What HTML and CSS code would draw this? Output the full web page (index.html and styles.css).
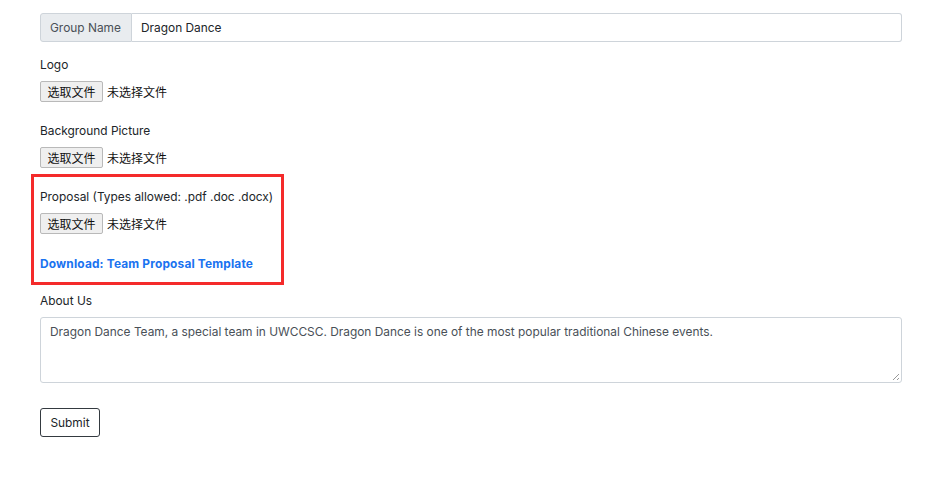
FILE: index.html
```html
<!DOCTYPE html>
<html lang="en">
<head>
<meta charset="utf-8">
<title>Group Form</title>
<link rel="stylesheet" href="styles.css">
</head>
<body>
<form class="form">
  <div class="input-group">
    <span class="addon">Group Name</span>
    <span class="control">Dragon Dance</span>
  </div>

  <div class="field field-logo">
    <div class="label">Logo</div>
    <div class="file"><span class="file-btn">选取文件</span><span class="file-text">未选择文件</span></div>
  </div>

  <div class="field field-bg">
    <div class="label">Background Picture</div>
    <div class="file"><span class="file-btn">选取文件</span><span class="file-text">未选择文件</span></div>
  </div>

  <div class="field field-proposal highlight">
    <div class="label">Proposal (Types allowed: .pdf .doc .docx)</div>
    <div class="file"><span class="file-btn">选取文件</span><span class="file-text">未选择文件</span></div>
    <a class="download" href="#">Download: Team Proposal Template</a>
  </div>

  <div class="field field-about">
    <div class="label">About Us</div>
    <div class="textarea">Dragon Dance Team, a special team in UWCCSC. Dragon Dance is one of the most popular traditional Chinese events.<span class="grip"></span></div>
  </div>

  <div class="actions">
    <span class="btn">Submit</span>
  </div>
</form>
</body>
</html>
```

FILE: styles.css
```css
*, *::before, *::after { box-sizing: border-box; }
html, body { margin: 0; padding: 0; background: #fff; }
body {
  font-family: Inter, "Liberation Sans", "Noto Sans CJK SC", sans-serif;
  font-size: 11.9px;
  line-height: 18px;
  color: #212529;
}
.form {
  width: 862px;
  margin-left: 40px;
  padding-top: 13px;
}
.input-group {
  display: flex;
  height: 29px;
}
.addon {
  display: flex;
  align-items: center;
  padding: 0 9px;
  width: 92px;
  background: #e9ecef;
  border: 1px solid #ced4da;
  border-radius: 3px 0 0 3px;
  color: #495057;
}
.control {
  flex: 1;
  display: flex;
  align-items: center;
  padding: 0 9px;
  border: 1px solid #ced4da;
  border-left: 0;
  border-radius: 0 3px 3px 0;
  color: #212529;
}
.field { display: flex; flex-direction: column; align-items: flex-start; }
.label { margin-bottom: 7px; }
.field-logo { margin-top: 14px; }
.field-bg { margin-top: 20px; }
.field-proposal { margin-top: 20px; }
.field-about { margin-top: 19px; }
.file {
  display: flex;
  align-items: center;
  height: 21px;
  font-family: "Noto Sans CJK SC", sans-serif;
  font-size: 12px;
}
.file-btn {
  height: 21px;
  width: 63px;
  display: flex;
  align-items: center;
  justify-content: center;
  background: #efefef;
  border: 1px solid #b9b9b9;
  border-radius: 2px;
  color: #111;
}
.file-text { margin-left: 4px; color: #111; }
.download {
  margin-top: 21px;
  font-weight: 700;
  letter-spacing: 0.17px;
  color: #1a73f0;
  text-decoration: none;
}
.highlight { position: relative; }
.highlight::after {
  content: "";
  position: absolute;
  top: -14px;
  bottom: -12px;
  left: -9px;
  width: 253px;
  border: 3px solid #f42a2a;
  pointer-events: none;
}
.textarea {
  position: relative;
  width: 100%;
  height: 66px;
  padding: 5px 9px;
  border: 1px solid #ced4da;
  border-radius: 3px;
  color: #495057;
}
.grip {
  position: absolute;
  right: 2px;
  bottom: 2px;
  width: 6px;
  height: 6px;
  background: linear-gradient(135deg, transparent 45%, #999 45%, #999 55%, transparent 55%, transparent 75%, #999 75%, #999 85%, transparent 85%);
}
.actions { margin-top: 25px; }
.btn {
  display: inline-flex;
  align-items: center;
  justify-content: center;
  width: 60px;
  height: 29px;
  border: 1px solid #343a40;
  border-radius: 3px;
  color: #212529;
}
```
